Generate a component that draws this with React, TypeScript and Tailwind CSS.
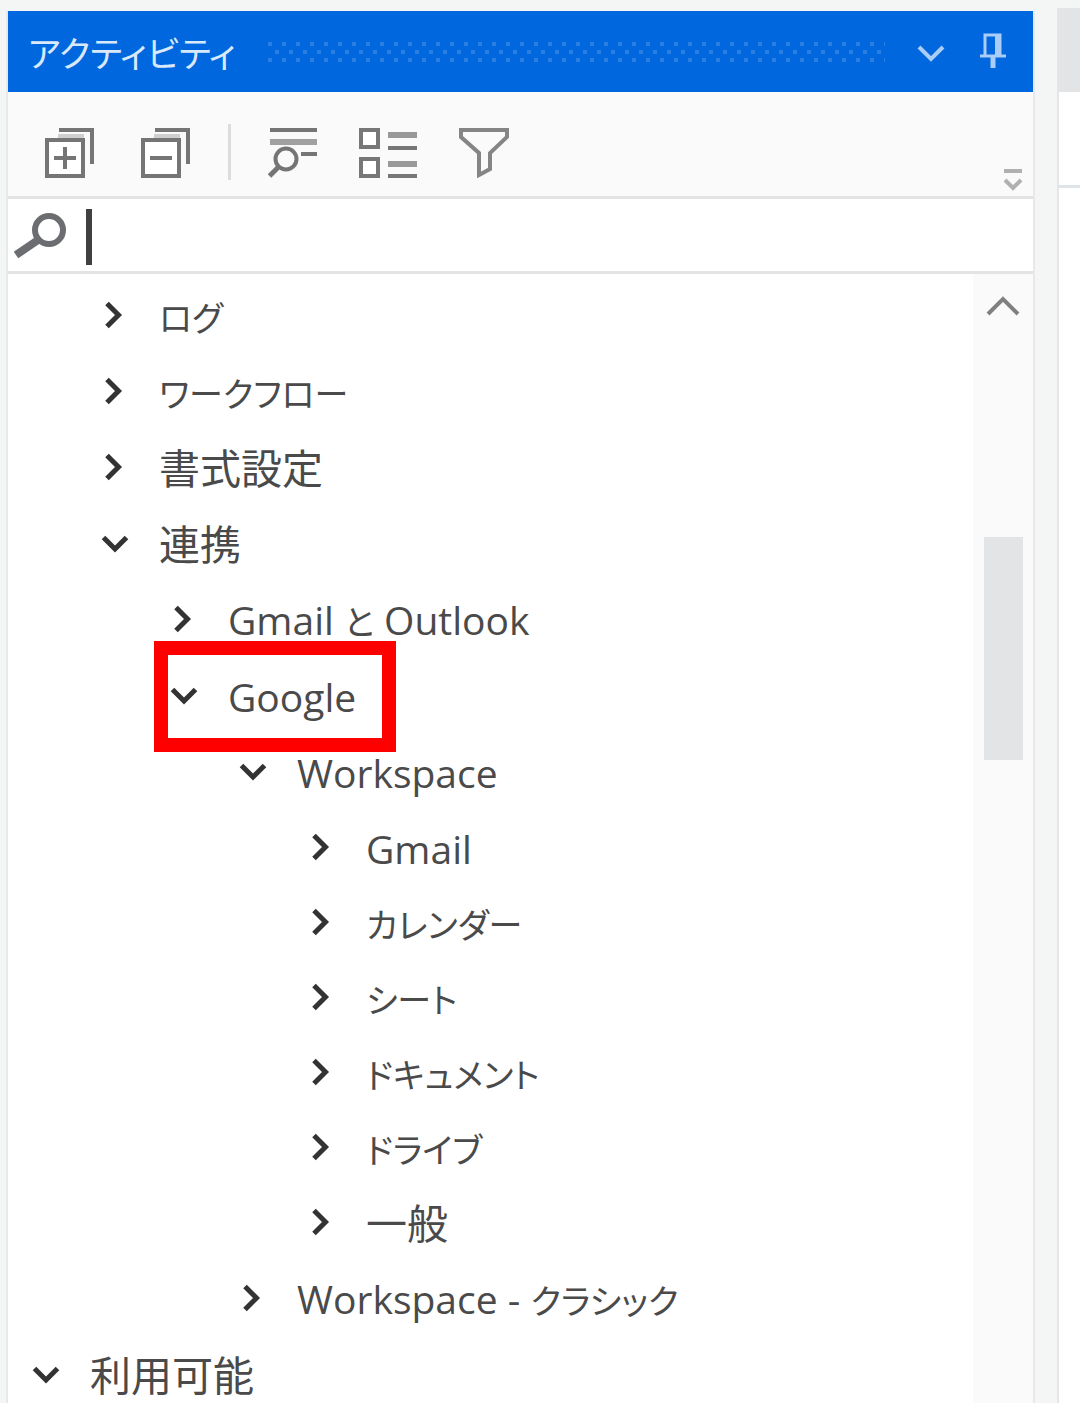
import type { ReactNode } from "react";

type TreeNode = {
  label: string;
  open?: boolean;
  marked?: boolean;
  children?: TreeNode[];
};

const tree: TreeNode[] = [
  { label: "ログ" },
  { label: "ワークフロー" },
  { label: "書式設定" },
  {
    label: "連携",
    open: true,
    children: [
      { label: "Gmail と Outlook" },
      {
        label: "Google",
        open: true,
        marked: true,
        children: [
          {
            label: "Workspace",
            open: true,
            children: [
              { label: "Gmail" },
              { label: "カレンダー" },
              { label: "シート" },
              { label: "ドキュメント" },
              { label: "ドライブ" },
              { label: "一般" },
            ],
          },
          { label: "Workspace - クラシック" },
        ],
      },
    ],
  },
];

const scripts = /([\u3040-\u30ff]+|[\u4e00-\u9fff]+)/;
const kana = /^[\u3040-\u30ff]/;
const kanji = /^[\u4e00-\u9fff]/;

/* Kana is set smaller and proportionally, as in a compact Japanese UI face. */
function Label({ text }: { text: string }) {
  return (
    <span className="pt-1 text-[39px] leading-[48px] whitespace-pre">
      {text.split(scripts).map((part, i) => {
        if (kana.test(part)) {
          return (
            <span key={i} className="text-[34px] [font-feature-settings:'palt']">
              {part}
            </span>
          );
        }
        if (kanji.test(part)) {
          return (
            <span key={i} className="text-[41px]">
              {part}
            </span>
          );
        }
        return part;
      })}
    </span>
  );
}

function Chevron({ open }: { open?: boolean }) {
  return (
    <svg
      viewBox="0 0 28 28"
      className="size-7 shrink-0"
      fill="none"
      stroke="#333"
      strokeWidth="5"
      aria-hidden="true"
    >
      <path d={open ? "M2.5 8.5 14 20 25.5 8.5" : "M6 2.5 17.5 14 6 25.5"} />
    </svg>
  );
}

function Row({ node }: { node: TreeNode }) {
  return (
    <button
      type="button"
      aria-expanded={!!node.open}
      className="relative flex h-[75px] items-center gap-[30px] text-left text-[#4a4a4a]"
    >
      <Chevron open={node.open} />
      <Label text={node.label} />
      {node.marked && (
        <span className="absolute -top-4 -right-10 -bottom-5 -left-4 border-[14px] border-[#f00]" />
      )}
    </button>
  );
}

function Branch({ nodes }: { nodes: TreeNode[] }) {
  const leaves = nodes.every((n) => !n.children);
  return (
    <ul className={leaves ? "flex flex-col pl-[69px]" : "flex flex-col gap-px pl-[69px]"}>
      {nodes.map((n) => (
        <li key={n.label} className="flex flex-col items-start gap-px">
          <Row node={n} />
          {n.children && <Branch nodes={n.children} />}
        </li>
      ))}
    </ul>
  );
}

function Tool({ label, children }: { label: string; children: ReactNode }) {
  return (
    <button type="button" aria-label={label} className="shrink-0">
      {children}
    </button>
  );
}

function StackIcon({ plus }: { plus?: boolean }) {
  return (
    <svg viewBox="0 0 52 52" className="size-[52px]" fill="none" stroke="#757575" strokeWidth="4">
      <path d="M15 4H48V38" />
      <path d="M14 10H40" stroke="#cfcfcf" />
      <path d="M3 14H39V50H3Z" fill="#fff" />
      <path d="M10 32H32" />
      {plus && <path d="M21 21V43" />}
    </svg>
  );
}

function TitleBar() {
  return (
    <header className="flex h-[81px] items-center bg-[#0067df] pl-5 text-[#d9e9fc]">
      <h1 className="pt-1 text-[35px] leading-[48px] [font-feature-settings:'palt']">
        アクティビティ
      </h1>
      <svg className="mx-8 h-[22px] flex-1" aria-hidden="true">
        <defs>
          <pattern id="grip" width="14" height="22" patternUnits="userSpaceOnUse">
            <path fill="#2a7fe5" d="M0 1h4v4H0zM7 9h4v4H7zM0 17h4v4H0z" />
          </pattern>
        </defs>
        <rect width="100%" height="22" fill="url(#grip)" />
      </svg>
      <button type="button" aria-label="メニュー">
        <svg viewBox="0 0 28 20" className="h-5 w-7" fill="none" stroke="#a9cdf6" strokeWidth="4">
          <path d="M2 5 14 17 26 5" />
        </svg>
      </button>
      <button type="button" aria-label="ピン留め" className="mr-[27px] ml-[35px]">
        <svg viewBox="0 0 26 38" className="h-[38px] w-[26px]" fill="none" stroke="#a9cdf6" strokeWidth="3">
          <path d="M5 22V2H20V22M0 23H26" />
          <path d="M18 1V22" strokeWidth="6" />
          <path d="M13 24V35" strokeWidth="5" />
        </svg>
      </button>
    </header>
  );
}

function Toolbar() {
  return (
    <div className="flex h-[107px] items-center border-b-3 border-[#e3e3e4] bg-[#fafafa] pt-4 pl-9">
      <Tool label="すべて展開">
        <StackIcon plus />
      </Tool>
      <div className="ml-11 flex items-center">
        <Tool label="すべて折りたたむ">
          <StackIcon />
        </Tool>
      </div>
      <div className="mx-9 h-14 w-[3px] bg-[#dcdcdd]" />
      <Tool label="検索結果">
        <svg viewBox="0 0 50 52" className="h-[52px] w-[50px]" fill="none" stroke="#757575" strokeWidth="4">
          <path d="M3 4H50" />
          <path d="M3 16H50" stroke="#a0a0a0" strokeWidth="6" />
          <path d="M34 28H50" />
          <circle cx="19" cy="33" r="10.5" />
          <path d="M11.5 41 2.5 50" strokeWidth="5" />
        </svg>
      </Tool>
      <div className="ml-10 flex items-center gap-10">
        <Tool label="表示">
          <svg viewBox="0 0 60 52" className="h-[52px] w-[60px]" fill="none" stroke="#777" strokeWidth="4">
            <path d="M4 4H21V21H4ZM4 33H21V50H4Z" fill="#fff" />
            <path d="M31 9H60M31 38H60" stroke="#999" strokeWidth="6" />
            <path d="M31 22H60M31 50H60" />
          </svg>
        </Tool>
        <Tool label="フィルター">
          <svg viewBox="0 0 52 52" className="size-[52px]" fill="none" stroke="#858585" strokeWidth="4">
            <path d="M4 4H50V11L33 27V43L22 49V27L4 11Z" />
          </svg>
        </Tool>
      </div>
      <button type="button" aria-label="その他" className="mr-2 mb-1 ml-auto self-end">
        <svg viewBox="0 0 24 24" className="size-6" fill="none" stroke="#b0b0b0" strokeWidth="4">
          <path d="M3 3H21M4 12 12 20 20 12" />
        </svg>
      </button>
    </div>
  );
}

function SearchBox() {
  return (
    <div className="flex h-[75px] items-center border-b-3 border-[#e3e3e6] pt-1 pl-1">
      <svg viewBox="0 0 56 56" className="size-14" fill="none" stroke="#6b6d70" strokeWidth="6">
        <circle cx="37" cy="21" r="14" />
        <path d="M26 31 4 46" strokeWidth="8" />
      </svg>
      <span className="ml-[18px] h-14 w-[6px] bg-[#404040]" />
      <input
        type="text"
        aria-label="検索"
        className="h-14 min-w-0 flex-1 text-[39px] text-[#4a4a4a] outline-none"
      />
    </div>
  );
}

export default function App() {
  return (
    <div className="flex h-screen overflow-hidden bg-[#f4f6f5] font-['Open_Sans','Noto_Sans_CJK_JP',sans-serif]">
      <main className="mt-[11px] ml-[6px] flex min-w-0 flex-1 flex-col border-x-2 border-[#e6e8e9] bg-white">
        <TitleBar />
        <Toolbar />
        <SearchBox />
        <div className="flex min-h-0 flex-1">
          <nav aria-label="アクティビティ" className="min-w-0 flex-1 overflow-hidden pt-[3px]">
            <div className="pl-6">
              <Branch nodes={tree} />
              <div className="pt-px">
                <Row node={{ label: "利用可能", open: true }} />
              </div>
            </div>
          </nav>
          <div className="flex w-[60px] flex-col items-center bg-[#fafafa]">
            <button type="button" aria-label="上へスクロール" className="mt-5">
              <svg viewBox="0 0 36 24" className="h-6 w-9" fill="none" stroke="#808080" strokeWidth="4">
                <path d="M3 20 18 5 33 20" />
              </svg>
            </button>
            <div className="mt-[219px] h-[223px] w-[39px] bg-[#e2e4e6]" />
          </div>
        </div>
      </main>
      <aside className="mt-2 ml-[22px] flex w-[23px] flex-col border-l-2 border-[#e3e5e8] bg-white">
        <div className="h-[84px] bg-[#e3e4e6]" />
        <div className="h-24 border-b-3 border-[#dfe4e8]" />
      </aside>
    </div>
  );
}
